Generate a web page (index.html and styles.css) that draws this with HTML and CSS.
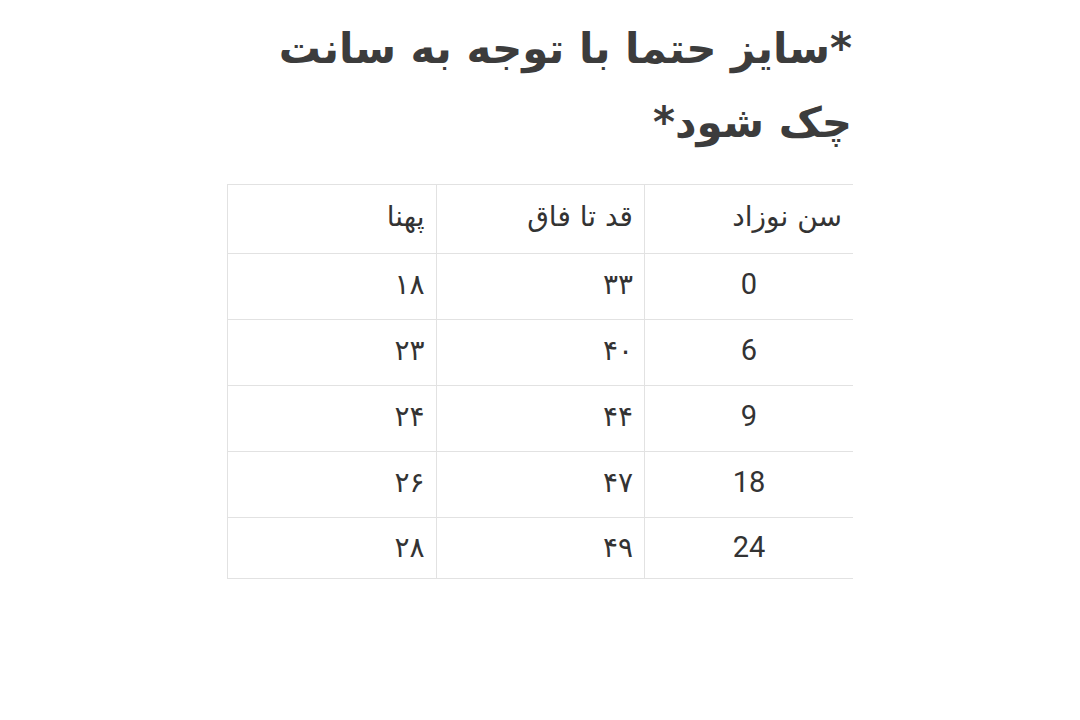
FILE: index.html
```html
<!DOCTYPE html>
<html lang="fa" dir="rtl">
<head>
<meta charset="utf-8">
<link rel="stylesheet" href="styles.css">
</head>
<body>
<div class="page">
  <h1 class="title">*سایز حتما با توجه به سانت چک شود*</h1>
  <table class="sizes">
    <tr class="head"><td>سن نوزاد</td><td>قد تا فاق</td><td>پهنا</td></tr>
    <tr><td class="num">0</td><td>۳۳</td><td>۱۸</td></tr>
    <tr><td class="num">6</td><td>۴۰</td><td>۲۳</td></tr>
    <tr><td class="num">9</td><td>۴۴</td><td>۲۴</td></tr>
    <tr><td class="num">18</td><td>۴۷</td><td>۲۶</td></tr>
    <tr class="last"><td class="num">24</td><td>۴۹</td><td>۲۸</td></tr>
  </table>
</div>
</body>
</html>
```
FILE: styles.css
```css
html, body {
  margin: 0;
  padding: 0;
  background: #fff;
}
.page {
  width: 626px;
  margin-right: 227px;
  padding-top: 12px;
  font-family: "DejaVu Sans", sans-serif;
}
.title {
  margin: 0 1px 0 0;
  font-size: 42px;
  line-height: 74px;
  font-weight: bold;
  color: #3c3c3c;
  text-align: right;
}
.sizes {
  margin-top: 24px;
  width: 626px;
  border-collapse: collapse;
  table-layout: fixed;
  color: #333;
  font-size: 28px;
}
.sizes td {
  border-top: 1px solid #e2e2e2;
  border-left: 1px solid #e2e2e2;
  height: 60px;
  padding: 0 11px 5px 0;
  text-align: right;
  vertical-align: middle;
}
.sizes tr.head td {
  height: 62px;
  padding-bottom: 6px;
}
.sizes tr.last td {
  height: 58px;
  padding-bottom: 2px;
  border-bottom: 1px solid #e2e2e2;
}
.sizes td.num {
  text-align: center;
  padding-right: 0;
  font-family: "Roboto", sans-serif;
  font-size: 29px;
}
```
